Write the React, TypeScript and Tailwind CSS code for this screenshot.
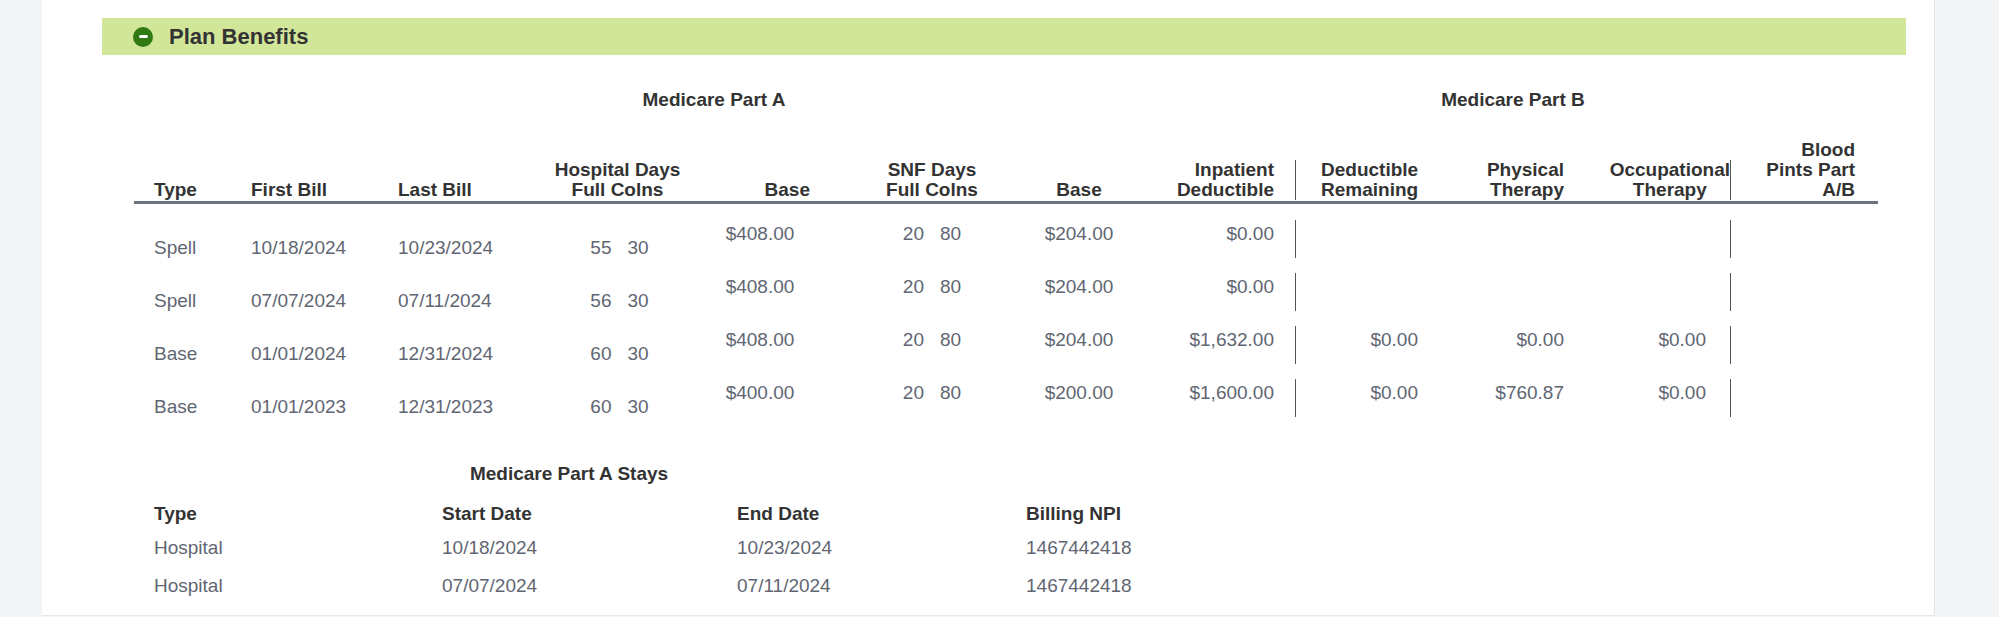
const font = { fontFamily: '"Liberation Sans", Arial, sans-serif' };

type Row = {
  type: string;
  first: string;
  last: string;
  hd: [string, string];
  base: string;
  snf: [string, string];
  base2: string;
  inpatient: string;
  dedRem?: string;
  pt?: string;
  ot?: string;
};

const rows: Row[] = [
  { type: 'Spell', first: '10/18/2024', last: '10/23/2024', hd: ['55', '30'], base: '$408.00', snf: ['20', '80'], base2: '$204.00', inpatient: '$0.00' },
  { type: 'Spell', first: '07/07/2024', last: '07/11/2024', hd: ['56', '30'], base: '$408.00', snf: ['20', '80'], base2: '$204.00', inpatient: '$0.00' },
  { type: 'Base', first: '01/01/2024', last: '12/31/2024', hd: ['60', '30'], base: '$408.00', snf: ['20', '80'], base2: '$204.00', inpatient: '$1,632.00', dedRem: '$0.00', pt: '$0.00', ot: '$0.00' },
  { type: 'Base', first: '01/01/2023', last: '12/31/2023', hd: ['60', '30'], base: '$400.00', snf: ['20', '80'], base2: '$200.00', inpatient: '$1,600.00', dedRem: '$0.00', pt: '$760.87', ot: '$0.00' },
];

const stays = [
  { type: 'Hospital', start: '10/18/2024', end: '10/23/2024', npi: '1467442418' },
  { type: 'Hospital', start: '07/07/2024', end: '07/11/2024', npi: '1467442418' },
];

const cols =
  'grid grid-cols-[117px_147px_147px_145px_140px_204px_90px_171px_155px_130px_151px_147px]';

export default function App() {
  return (
    <div style={font} className="flex h-[617px] w-[1999px] bg-[#f3f4f6]">
      <div className="ml-[42px] h-[616px] w-[1893px] border-r border-b border-[#e5e7eb] bg-white pt-[18px]">
        <div className="ml-[60px] flex h-[37px] w-[1804px] items-center bg-[#d2e69a]">
          <span className="ml-[31px] flex h-5 w-5 items-center justify-center rounded-full bg-[#2f7a12]">
            <span className="h-[3px] w-[9px] rounded bg-white" />
          </span>
          <span className="ml-[16px] text-[22px] font-bold text-[#333]">Plan Benefits</span>
        </div>

        <div className="ml-[92px] w-[1744px] text-[19px] leading-5">
          <div className="mt-[35px] flex font-bold text-[#333]">
            <div className="w-[1160px] text-center">Medicare Part A</div>
            <div className="w-[438px] text-center">Medicare Part B</div>
          </div>

          <div className={`${cols} mt-[30px] items-end border-b-[3px] border-[#6b7280] pb-[1px] font-bold text-[#333]`}>
            <div className="pl-5">Type</div>
            <div>First Bill</div>
            <div>Last Bill</div>
            <div className="text-center">Hospital Days<br />Full Colns</div>
            <div className="pr-5 text-right">Base</div>
            <div className="text-center">SNF Days<br />Full Colns</div>
            <div className="text-center">Base</div>
            <div className="pr-[21px] text-right">Inpatient<br />Deductible</div>
            <div className="border-l-[1.5px] border-[#555] pl-[25px]">Deductible<br />Remaining</div>
            <div className="pr-4 text-right">Physical<br />Therapy</div>
            <div className="border-r-[1.5px] border-[#555] text-right">
              <span className="inline-block text-center">Occupational<br />Therapy</span>
            </div>
            <div className="pr-[23px] text-right">Blood<br />Pints Part<br />A/B</div>
          </div>

          <div className="pt-4 text-[19px] text-[#5f6672]">
            {rows.map((r, i) => (
              <div key={i} className={`${cols} h-[53px]`}>
                <div className="pt-[18px] pl-5">{r.type}</div>
                <div className="pt-[18px]">{r.first}</div>
                <div className="pt-[18px]">{r.last}</div>
                <div className="flex justify-center gap-4 pt-[18px] pl-1">
                  <span>{r.hd[0]}</span><span>{r.hd[1]}</span>
                </div>
                <div className="pt-1 text-center">{r.base}</div>
                <div className="flex justify-center gap-4 pt-1">
                  <span>{r.snf[0]}</span><span>{r.snf[1]}</span>
                </div>
                <div className="pt-1 text-center">{r.base2}</div>
                <div className="pt-1 pr-[21px] text-right">{r.inpatient}</div>
                <div className="h-[38px] border-l-[1.5px] border-[#555] pt-1 pr-8 text-right">{r.dedRem}</div>
                <div className="pt-1 pr-4 text-right">{r.pt}</div>
                <div className="h-[38px] border-r-[1.5px] border-[#555] pt-1 pr-6 text-right">{r.ot}</div>
                <div />
              </div>
            ))}
          </div>
        </div>

        <div className="ml-[112px] text-[19px] leading-5">
          <div className="mt-[32px] w-[830px] text-center font-bold text-[#333]">Medicare Part A Stays</div>
          <div className="mt-[20px] grid grid-cols-[288px_295px_289px_200px] font-bold text-[#333]">
            <div>Type</div>
            <div>Start Date</div>
            <div>End Date</div>
            <div>Billing NPI</div>
          </div>
          <div className="mt-[14px] text-[19px] text-[#5f6672]">
            {stays.map((s, i) => (
              <div key={i} className="grid h-[38px] grid-cols-[288px_295px_289px_200px]">
                <div>{s.type}</div>
                <div>{s.start}</div>
                <div>{s.end}</div>
                <div>{s.npi}</div>
              </div>
            ))}
          </div>
        </div>
      </div>
    </div>
  );
}
